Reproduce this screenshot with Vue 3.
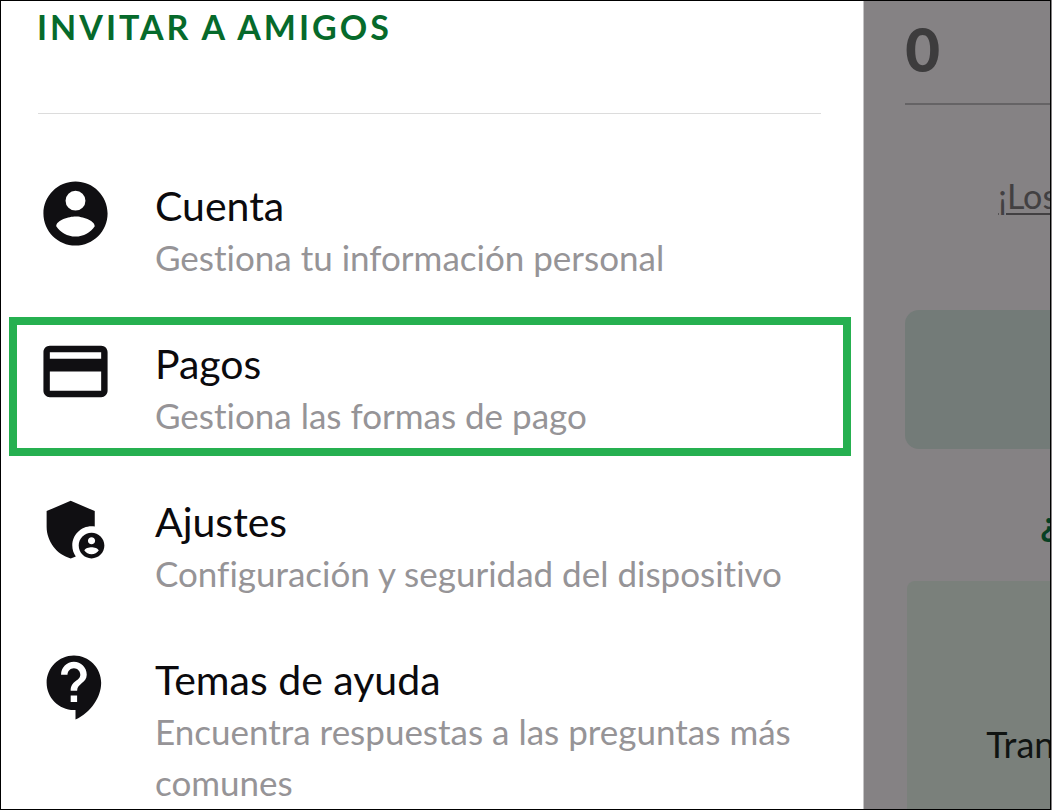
<script setup>
const items = [
  {
    title: 'Cuenta',
    text: 'Gestiona tu información personal',
    icon: 'M12 2C6.48 2 2 6.48 2 12s4.48 10 10 10 10-4.48 10-10S17.52 2 12 2zm0 2.9a3.1 3.1 0 1 1 0 6.2 3.1 3.1 0 0 1 0-6.2zm0 14.3c-2.5 0-4.71-1.28-6-3.22.03-1.99 4-3.08 6-3.08 1.99 0 5.97 1.09 6 3.08-1.29 1.94-3.5 3.22-6 3.22z'
  },
  {
    title: 'Pagos',
    text: 'Gestiona las formas de pago',
    active: true,
    icon: 'M20 4H4c-1.11 0-1.99.89-1.99 2L2 18c0 1.11.89 2 2 2h16c1.11 0 2-.89 2-2V6c0-1.11-.89-2-2-2zm0 14H4v-6h16v6zm0-10H4V6h16v2z'
  },
  {
    title: 'Ajustes',
    text: 'Configuración y seguridad del dispositivo',
    icon: 'M17 11c.34 0 .67.04 1 .09V6.27L10.5 3 3 6.27v4.91c0 4.54 3.2 8.79 7.5 9.82.55-.13 1.08-.32 1.6-.55-.69-.98-1.1-2.17-1.1-3.45 0-3.31 2.69-6 6-6zM17 13c-2.21 0-4 1.79-4 4s1.79 4 4 4 4-1.79 4-4-1.79-4-4-4zm0 1.38c.62 0 1.12.51 1.12 1.12s-.51 1.12-1.12 1.12-1.12-.51-1.12-1.12.5-1.12 1.12-1.12zm0 5.37c-.93 0-1.74-.46-2.24-1.17.05-.72 1.51-1.08 2.24-1.08s2.19.36 2.24 1.08c-.5.71-1.31 1.17-2.24 1.17z'
  },
  {
    title: 'Temas de ayuda',
    text: 'Encuentra respuestas a las preguntas más comunes',
    icon: 'M11.5 2C6.81 2 3 5.81 3 10.5S6.81 19 11.5 19h.5v3c4.86-2.34 8-7 8-11.5C20 5.81 16.19 2 11.5 2zm1 14.5h-2v-2h2v2zm0-3.5h-2c0-3.25 3-3 3-5 0-1.1-.9-2-2-2s-2 .9-2 2h-2c0-2.21 1.79-4 4-4s4 1.79 4 4c0 2.5-3 2.75-3 5z'
  }
]
</script>

<template>
  <div class="screen">
    <div class="frame">
      <aside class="drawer">
        <button class="invite" type="button">INVITAR A AMIGOS</button>
        <hr class="rule" />
        <nav class="menu">
          <a v-for="item in items" :key="item.title" href="#" class="item" :class="{ active: item.active }">
            <svg class="icon" viewBox="0 0 24 24" aria-hidden="true"><path :d="item.icon" /></svg>
            <span class="copy">
              <span class="title">{{ item.title }}</span>
              <span class="text">{{ item.text }}</span>
            </span>
          </a>
        </nav>
      </aside>
      <main class="behind">
        <div class="count">0</div>
        <a href="#" class="link">¡Los</a>
        <div class="banner"></div>
        <h2 class="question">¿</h2>
        <section class="card">Tran</section>
      </main>
    </div>
  </div>
</template>

<style>
body {
  margin: 0;
}
</style>

<style scoped>
.screen {
  box-sizing: border-box;
  height: 100vh;
  padding-right: 1px;
  background: #858284;
  font-family: Lato, "Open Sans", sans-serif;
  font-variant-ligatures: none;
}
.frame {
  box-sizing: border-box;
  display: flex;
  height: 100%;
  border: 1px solid #000;
  overflow: hidden;
}
.drawer {
  box-sizing: border-box;
  flex: 0 0 auto;
  width: 82.3%;
  background: #fff;
  border-right: 1px solid #c4c3c4;
}
.invite {
  display: block;
  margin: 0 0 0 36px;
  padding: 0;
  border: 0;
  background: none;
  font-family: inherit;
  font-size: 34px;
  font-weight: 700;
  line-height: 52px;
  letter-spacing: 3px;
  color: #066a2b;
}
.rule {
  margin: 60px 42px 0 37px;
  border: 0;
  border-top: 1px solid #dcdcdc;
}
.menu {
  display: flex;
  flex-direction: column;
  gap: 19px;
  margin: 45px 12px 0 8px;
}
.item {
  display: flex;
  align-items: flex-start;
  gap: 41px;
  padding: 8px 16px 7px 20px;
  border: 8px solid transparent;
  text-decoration: none;
  color: #0b0a0d;
}
.item.active {
  border-color: #26b050;
}
.icon {
  flex: none;
  width: 77px;
  height: 77px;
  fill: #100f12;
}
.copy {
  display: block;
  padding-top: 5px;
}
.title,
.text {
  display: block;
}
.title {
  font-size: 41px;
  line-height: 52px;
}
.text {
  font-size: 35px;
  line-height: 51px;
  color: #969497;
}
.behind {
  flex: 1;
  display: flex;
  flex-direction: column;
  min-width: 0;
  padding-left: 41px;
  background: #858284;
  overflow: hidden;
}
.count {
  padding-top: 12px;
  padding-bottom: 18px;
  border-bottom: 2px solid #656365;
  font-size: 60px;
  font-weight: 900;
  line-height: 72px;
  color: #3d3c3d;
}
.link {
  margin: 65px 0 0 93px;
  font-size: 34px;
  line-height: 52px;
  text-underline-offset: 4px;
  text-decoration-thickness: 2px;
  white-space: nowrap;
  color: #424042;
}
.banner {
  flex: none;
  height: 139px;
  margin-top: 88px;
  border-radius: 14px 0 0 14px;
  background: #737b78;
}
.question {
  margin: 48px 0 0 135px;
  font-size: 34px;
  font-weight: 700;
  line-height: 52px;
  color: #064023;
}
.card {
  flex: 1;
  margin: 32px 0 0 2px;
  padding: 137px 0 0 79px;
  border-radius: 8px 0 0 0;
  background: #7a807b;
  font-size: 36px;
  line-height: 52px;
  white-space: nowrap;
  color: #101412;
}
</style>
